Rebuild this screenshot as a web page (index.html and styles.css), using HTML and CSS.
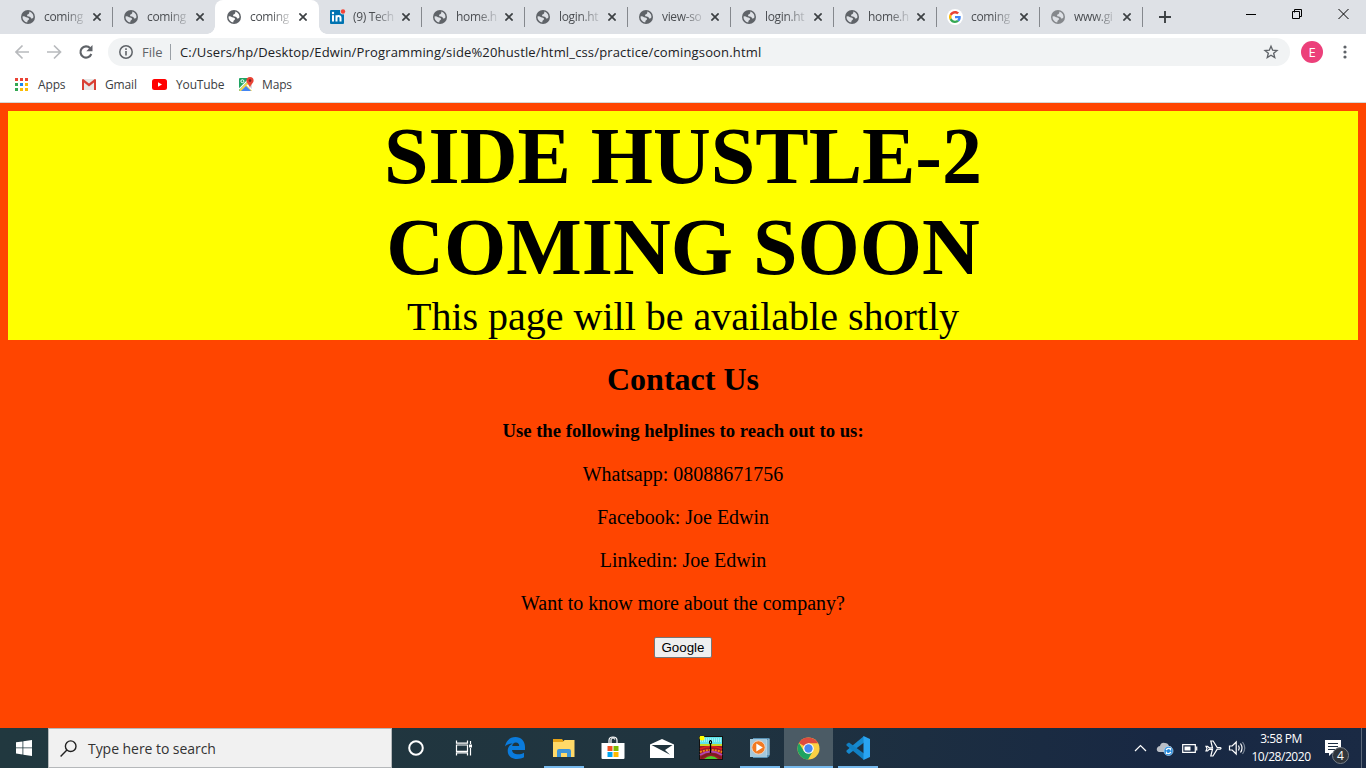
FILE: index.html
```html
<!DOCTYPE html>
<html lang="en">
<head>
<meta charset="utf-8">
<title>coming soon</title>
<link rel="stylesheet" href="styles.css">
</head>
<body>
<svg width="0" height="0" class="defs" aria-hidden="true">
  <symbol id="globe" viewBox="0 0 14 14"><circle cx="7" cy="7" r="7" fill="currentColor"/><path class="cut" d="M8.300 1.600Q10.500 2 11.800 4.300 12.700 6 12.400 7.600 11.500 8.800 10.200 8.400 9.600 6.900 7.800 6.600 6 6.600 6 5.200 6.100 4 7.600 3.900 8.600 3.500 8.300 1.600zM1.500 6.500Q3.500 6 5 7.200 6.200 7.400 7.800 8.200 8.600 9.200 7.400 10 6.300 10.400 6.200 12.500 3.800 12.100 2.400 10 1.400 8.500 1.500 6.500z"/></symbol>
  <symbol id="close" viewBox="0 0 8 8"><path d="M.4.4l7.200 7.200M7.600.4L.4 7.600" stroke="#3c4043" stroke-width="1.7" fill="none"/></symbol>
  <symbol id="google" viewBox="0 0 48 48"><path fill="#ea4335" d="M24 9.500c3.500 0 6.700 1.200 9.200 3.600l6.900-6.900C35.900 2.400 30.500 0 24 0 14.600 0 6.500 5.400 2.600 13.200l8 6.200C12.400 13.700 17.700 9.500 24 9.500z"/><path fill="#4285f4" d="M47 24.500c0-1.600-.2-3.100-.4-4.500H24v9h12.900c-.6 3-2.200 5.500-4.700 7.200l7.700 6C44.400 38 47 31.800 47 24.500z"/><path fill="#fbbc05" d="M10.500 28.600a14.500 14.500 0 010-9.200l-8-6.200a24 24 0 000 21.600z"/><path fill="#34a853" d="M24 48c6.500 0 11.900-2.100 15.900-5.800l-7.700-6c-2.200 1.500-4.900 2.300-8.200 2.300-6.300 0-11.600-4.200-13.500-9.900l-8 6.200C6.500 42.600 14.600 48 24 48z"/></symbol>
</svg>

<div class="tabs">
  <div class="tab"><svg class="fav"><use href="#globe"/></svg><span class="name">coming</span><svg class="x"><use href="#close"/></svg></div>
  <div class="tab plain"><svg class="fav"><use href="#globe"/></svg><span class="name">coming</span><svg class="x"><use href="#close"/></svg></div>
  <div class="tab active"><svg class="fav"><use href="#globe"/></svg><span class="name">coming</span><svg class="x"><use href="#close"/></svg></div>
  <div class="tab"><svg class="fav linkedin" viewBox="0 0 16 15"><rect y="1" width="14" height="14" rx="1" fill="#0073b1"/><path d="M3 6.300v6.200M6.500 12.500V6.300M6.500 9q0-2 2-2t2 2v3.500" stroke="#fff" stroke-width="2" fill="none"/><circle cx="3" cy="4" r="1.200" fill="#fff"/><circle cx="13" cy="2.500" r="3" fill="#dee1e6"/><circle cx="13" cy="2.500" r="2.200" fill="#f44336"/></svg><span class="name">(9) Tech</span><svg class="x"><use href="#close"/></svg></div>
  <div class="tab"><svg class="fav"><use href="#globe"/></svg><span class="name">home.h</span><svg class="x"><use href="#close"/></svg></div>
  <div class="tab"><svg class="fav"><use href="#globe"/></svg><span class="name">login.ht</span><svg class="x"><use href="#close"/></svg></div>
  <div class="tab"><svg class="fav"><use href="#globe"/></svg><span class="name">view-so</span><svg class="x"><use href="#close"/></svg></div>
  <div class="tab"><svg class="fav"><use href="#globe"/></svg><span class="name">login.ht</span><svg class="x"><use href="#close"/></svg></div>
  <div class="tab"><svg class="fav"><use href="#globe"/></svg><span class="name">home.h</span><svg class="x"><use href="#close"/></svg></div>
  <div class="tab"><span class="fav disc"><svg width="12" height="12"><use href="#google"/></svg></span><span class="name">coming</span><svg class="x"><use href="#close"/></svg></div>
  <div class="tab dim"><svg class="fav"><use href="#globe"/></svg><span class="name">www.gi</span><svg class="x"><use href="#close"/></svg></div>
  <svg class="plus" viewBox="0 0 12 12"><path d="M6 0v12M0 6h12" stroke="#3c4043" stroke-width="1.900"/></svg>
  <svg class="winctl" width="104" height="14" viewBox="0 0 104 14"><path d="M0 7.500h10M48.500 5.500v-3h7v7h-2M46.500 4.500h7v7h-7zM92.500 2l10 10M102.500 2l-10 10" stroke="#000" fill="none"/></svg>
</div>

<div class="toolbar">
  <svg class="nav" width="82" height="16" viewBox="0 0 82 16" fill="none"><path d="M14 8H1.500M7.500 1.500L1 8l6.500 6.500M32 8h13M39 1.500L45.500 8 39 14.500" stroke="#b8babd" stroke-width="1.700"/><path d="M75.200 4.200A5.600 5.600 0 1 0 76.300 10" stroke="#5f6368" stroke-width="2.100"/><path d="M77.500 1v6.200h-6.200z" fill="#5f6368"/></svg>
  <div class="omnibox">
    <svg width="14" height="14" viewBox="0 0 14 14" fill="none"><circle cx="7" cy="7" r="6.200" stroke="#5f6368" stroke-width="1.500"/><path d="M7 6v4.500M7 3.300v1.600" stroke="#5f6368" stroke-width="1.600"/></svg>
    <span class="file">File</span><i class="bar"></i><span class="url">C:/Users/hp/Desktop/Edwin/Programming/side%20hustle/html_css/practice/comingsoon.html</span>
    <svg class="star" width="16" height="16" viewBox="0 0 24 24"><path d="M12 3.200l2.500 6 6.500.5-5 4.200 1.600 6.400-5.600-3.500-5.600 3.500L8 13.900 3 9.700l6.500-.5z" fill="none" stroke="#5f6368" stroke-width="2"/></svg>
  </div>
  <span class="avatar">E</span>
  <svg class="dots" width="4" height="14" viewBox="0 0 4 14" fill="#5f6368"><circle cx="2" cy="2" r="1.600"/><circle cx="2" cy="7" r="1.600"/><circle cx="2" cy="12" r="1.600"/></svg>
</div>

<div class="bookmarks">
  <svg class="b-apps" width="13" height="13" viewBox="0 0 13 13"><path d="M0 0h3v3H0zM5 0h3v3H5zM10 0h3v3h-3z" fill="#ea4335"/><path d="M0 5h3v3H0z" fill="#34a853"/><path d="M5 5h3v3H5z" fill="#1a86f0"/><path d="M10 5h3v3h-3zM5 10h3v3H5zM10 10h3v3h-3z" fill="#fbbc05"/><path d="M0 10h3v3H0z" fill="#34a853"/></svg>
  <span class="w-apps">Apps</span>
  <svg class="b-gmail" width="14" height="11" viewBox="0 0 14 11"><path d="M1 0h12v11H1z" fill="#e8e8e8"/><path d="M0 1v10h2V3.500l5 4 5-4V11h2V1q0-1-1.200-1L7 4.600 1.200 0Q0 0 0 1z" fill="#d93f34"/></svg>
  <span class="w-gmail">Gmail</span>
  <svg class="b-yt" width="15" height="11" viewBox="0 0 15 11"><rect width="15" height="11" rx="2.500" fill="#f00"/><path d="M6 3.200v4.600l4-2.300z" fill="#fff"/></svg>
  <span class="w-yt">YouTube</span>
  <svg class="b-maps" width="15" height="15" viewBox="0 0 15 15"><rect y="1" width="13" height="13" rx="1" fill="#1fa463"/><path d="M0 13L11 2l2 3v9H1z" fill="#f2d34b"/><path d="M2 14l5-5 5 5z" fill="#4285f4"/><path d="M8 8l5 5V7z" fill="#dadce0"/><path d="M0 12L10 2M8 8l6 6" stroke="#fff" stroke-width="1.200"/><path d="M11 0a3.600 3.600 0 00-3.600 3.600C7.400 6.200 10.200 7 11 11c.8-4 3.600-4.800 3.600-7.400A3.600 3.600 0 0011 0z" fill="#ea4335"/><circle cx="11" cy="3.600" r="1.300" fill="#7b231e"/><circle cx="3.400" cy="4.200" r="1.500" fill="none" stroke="#fff"/></svg>
  <span class="w-maps">Maps</span>
</div>

<main class="page">
  <header class="hero">
    <h1>SIDE HUSTLE-2<br>COMING SOON</h1>
    <div class="sub">This page will be available shortly</div>
  </header>
  <h2>Contact Us</h2>
  <h3>Use the following helplines to reach out to us:</h3>
  <p>Whatsapp: 08088671756</p>
  <p>Facebook: Joe Edwin</p>
  <p>Linkedin: Joe Edwin</p>
  <p>Want to know more about the company?</p>
  <button class="go">Google</button>
</main>

<footer class="taskbar">
  <div class="start"><svg width="16" height="16" viewBox="0 0 16 16" fill="#fff"><path d="M0 2.300L6.500 1.400v6.100H0zM7.300 1.200L16 0v7.500H7.300zM0 8.300h6.500v6.200L0 13.600zM7.300 8.300H16V16l-8.700-1.200z"/></svg></div>
  <div class="search"><svg width="17" height="17" viewBox="0 0 17 17" fill="none" stroke="#222" stroke-width="1.400"><circle cx="10.700" cy="6.200" r="5.300"/><path d="M6.900 10L.6 16.400"/></svg><span>Type here to search</span></div>
  <div class="app task"><svg width="16" height="16" viewBox="0 0 16 16"><circle cx="8" cy="8" r="6.800" fill="none" stroke="#fff" stroke-width="2"/></svg></div>
  <div class="app view"><svg width="18" height="16" viewBox="0 0 18 16" fill="none" stroke="#fff" stroke-width="1.200"><path d="M1.500.5v2.700h11V.5M1.500 15.500v-2.700h11v2.700M1.500 5h11v6.300h-11zM15.500 1v3M15.500 8v7.500"/><path d="M14 4.500h3v3h-3z" fill="#fff" stroke="none"/></svg></div>
  <div class="app"><svg width="22" height="22" viewBox="0 0 22 22"><path d="M1 9.500C2 3.500 6 0 11.500 0 17 0 21 4 21 10v3H8c.4 3 3 4.300 6.200 4.300 2.300 0 4-.6 5.800-1.600v4.500c-2 1.200-4.300 1.700-7 1.700-5.700 0-9.300-3.300-9.300-8 0-3.400 1.800-6 5-7.400C5.500 6.400 3 7.300 1 9.500zM8.200 9h7c0-2.300-1.200-3.600-3.300-3.600S8.500 6.800 8.200 9z" fill="#0a7bdc"/></svg></div>
  <div class="app open"><svg width="22" height="18" viewBox="0 0 22 18"><path d="M0 0h9l1.500 2H21v16H0z" fill="#e6a317"/><path d="M0 3h10l1.500-2H21.500v17H0z" fill="#ffd968"/><path d="M4 18v-6q0-2 2-2h10q2 0 2 2v6h-4v-4H8v4z" fill="#3d94d8"/></svg></div>
  <div class="app"><svg width="24" height="24" viewBox="0 0 24 24"><path d="M8 8V4.500Q8 1 12 1t4 3.500V8M10 7V3.500Q12 .5 14 3.500" fill="none" stroke="#fff" stroke-width="1.200"/><path d="M.5 7h23v15q0 1-1 1h-21q-1 0-1-1z" fill="#fff"/><path d="M6.500 10h5v5h-5z" fill="#f25022"/><path d="M12.500 10h5v5h-5z" fill="#7fba00"/><path d="M6.500 16h5v5h-5z" fill="#00a4ef"/><path d="M12.500 16h5v5h-5z" fill="#ffb900"/></svg></div>
  <div class="app"><svg width="24" height="19" viewBox="0 0 24 19"><path d="M0 5.500L12 0l12 5.500V19H0z" fill="#fff"/><path d="M1.500 6h21L15 11l5 4.700L11 11z" fill="#20343d"/></svg></div>
  <div class="app"><svg width="24" height="24" viewBox="0 0 24 24"><path d="M0 0h24v24H0z" fill="#111"/><path d="M1 1h22v7H1z" fill="#5fe4ea"/><path d="M1 5h22M1 3h22" stroke="#d8ffff" stroke-dasharray="1 1"/><circle cx="3" cy="2" r="2.500" fill="#ff0"/><path d="M1 8h22v2H1z" fill="#c9d426"/><path d="M1 10h22v13H1z" fill="#a01828"/><g fill="none"><path d="M1 13q11-5 22 0" stroke="#e02020" stroke-width="1.500"/><path d="M1 16q11-4 22 0" stroke="#f08a10" stroke-width="2" stroke-dasharray="2 1"/><path d="M1 19q11-7 22 0" stroke="#b048b0" stroke-width="2"/><path d="M2 22q10-8 20 0" stroke="#7b1d20" stroke-width="2"/></g><path d="M5 23q7-6 14 0z" fill="#4cd02a"/><path d="M11.500 4v13" stroke="#000" stroke-width="1.300"/><path d="M10.500 5h2v2.500h-2z" fill="#7ee" stroke="#000"/></svg></div>
  <div class="app open"><svg width="20" height="20" viewBox="0 0 20 20"><path d="M3 0h16.500v18L17 20H3z" fill="#5892b5"/><path d="M0 1h17v18H0z" fill="#a4c8dc"/><path d="M17 2v15M19 1v16" stroke="#d5e9f3" stroke-width=".7"/><circle cx="8.500" cy="9.500" r="6.700" fill="#f27a22" stroke="#e9d5c8"/><path d="M6.300 5.500v8l6.500-4z" fill="#fff"/></svg></div>
  <div class="app open current"><svg width="23" height="23" viewBox="0 0 48 48"><circle cx="24" cy="24" r="23" fill="#fbd043"/><path d="M24 24L4 12.500A23 23 0 0 1 44 13H24z" fill="#dd4b3e"/><path d="M4 12.500A23 23 0 0 0 23 47l10-17.500L24 34 14.500 29.500z" fill="#1ea362"/><circle cx="24" cy="24" r="11" fill="#fff"/><circle cx="24" cy="24" r="8.700" fill="#4587f3"/></svg></div>
  <div class="app open"><svg width="24" height="24" viewBox="0 0 24 24"><path d="M18 0v6.500L3 18l-2.500-2v-1.500z" fill="#1689cf"/><path d="M3 6.500L.5 8v1.500L18 24v-6.500z" fill="#1180c4"/><path d="M17.500 0L24 3v18l-6.500 3z" fill="#29a4f2"/></svg></div>
  <div class="tray">
    <svg width="112" height="20" viewBox="0 0 112 20" fill="none" stroke="#fff" stroke-width="1.200"><path d="M1 13l5.500-5.500L12 13"/><path d="M25 14q-3-1-2-4 1-2 3-2 1-4 5-3 3 0 4 3 3 0 3 3v3z" fill="#b9bec6" stroke="none"/><circle cx="34.500" cy="13" r="4.500" fill="#2087dc" stroke="#b9dcf6" stroke-width=".7"/><path d="M32 12q2.500-3 4.500-.5V10M37 14q-2.500 3-4.500.5V16"/><path d="M48.700 6.600h12.600v7.800H48.700zM62.700 8.500v4"/><path d="M50.500 8.500h6v4h-6z" fill="#fff" stroke="none"/><path d="M72 8.300l1.500 0 1.700 1.500h3.300L76.800 3h2.300l4.100 6.500h3q1.700.7 0 1.700h-3L79 18h-2.200l1.700-6.600h-3.300L73.500 13H72l1-2.500z"/><path d="M95.500 8h2.700l4-4v12l-4-4h-2.700zM104.500 7.500q1.500 2.500 0 5M106.500 5.500q3 4.500 0 9"/><path d="M108.500 4q4.500 6 0 12" stroke="#7b8797"/></svg>
    <div class="clock"><span class="time">3:58 PM</span><span class="date">10/28/2020</span></div>
    <div class="notes"><svg width="16" height="16" viewBox="0 0 16 16"><path d="M0 0h16v13H7l-3 3v-3H0z" fill="#fff"/><path d="M3 3.500h10M3 6.500h10M3 9.500h7" stroke="#1b2d42"/></svg><span class="count">4</span></div>
    <i class="peek"></i>
  </div>
</footer>
</body>
</html>
```

FILE: styles.css
```css
* { box-sizing: border-box; }
body { margin: 0; width: 1366px; height: 768px; overflow: hidden; display: flex; flex-direction: column; font-family: "Open Sans", "Noto Sans", sans-serif; color: #3c4043; background: #fff; }
svg { display: block; flex: none; }
.defs { position: absolute; }

.tabs { height: 34px; flex: none; display: flex; background: #dee1e6; padding-left: 9px; }
.tab { --cut: #dee1e6; width: 103px; height: 34px; flex: none; display: flex; align-items: center; padding-left: 12px; position: relative; color: #5f6368; }
.cut { fill: var(--cut); }
.tab::after { content: ""; width: 1px; height: 20px; background: #85888d; position: absolute; right: -1px; top: 7px; }
.tab.plain::after { display: none; }
.tab.active { --cut: #fff; z-index: 1; }
.tab.active::before { content: ""; position: absolute; left: 0; top: 0; width: 104px; height: 34px; background: #fff; border-radius: 8px 8px 0 0; }
.tab.active::after { left: -8px; right: auto; top: 26px; width: 120px; height: 8px; background: radial-gradient(circle at 0 0, transparent 7.5px, #fff 8px) left / 8px 8px no-repeat, radial-gradient(circle at 100% 0, transparent 7.5px, #fff 8px) right / 8px 8px no-repeat; }
.tab.active > * { position: relative; }
.tab.dim { color: #85888c; }
.fav { width: 14px; height: 14px; flex: none; }
.fav.linkedin { width: 16px; height: 15px; margin: 0 -2px 1px 0; }
.fav.disc { display: flex; align-items: center; justify-content: center; background: #fff; border-radius: 50%; box-shadow: 0 0 0 1px #fff; }
.name { width: 41px; height: 18px; flex: none; margin-left: 9px; white-space: nowrap; font-size: 12px; letter-spacing: -.35px; line-height: 18px; color: #4a4d51; -webkit-mask-image: linear-gradient(90deg, #000 50%, rgba(0,0,0,.15)); mask-image: linear-gradient(90deg, #000 50%, rgba(0,0,0,.15)); }
.x { width: 8px; height: 8px; margin-left: 8px; }
.plus { width: 12px; height: 12px; margin: 11px 0 0 17px; }
.winctl { margin: 7px 0 0 75px; }

.toolbar { height: 36px; flex: none; display: flex; align-items: center; }
.nav { margin-left: 15px; }
.omnibox { width: 1182px; height: 28px; margin-left: 11px; border-radius: 14px; background: #f1f3f4; display: flex; align-items: center; padding-left: 11px; }
.file { width: 28px; margin-left: 9px; font-size: 13px; color: #5f6368; }
.bar { width: 1px; height: 16px; background: #9aa0a6; }
.url { width: 1083px; margin-left: 9px; font-size: 13px; letter-spacing: .155px; color: #202124; white-space: nowrap; }
.star { margin-right: 9px; }
.avatar { width: 22px; height: 22px; margin-left: 11px; border-radius: 50%; background: #ec407a; color: #fff; font-size: 13px; line-height: 22px; text-align: center; }
.dots { margin-left: 20px; }

.bookmarks { height: 33px; flex: none; display: flex; align-items: center; padding: 0 0 4px 15px; font-size: 12px; letter-spacing: -.15px; border-bottom: 1px solid #d5d8d5; }
.w-apps { width: 44px; margin-left: 10px; }
.w-gmail { width: 47px; margin-left: 9px; }
.w-yt { width: 63px; margin-left: 9px; }
.w-maps { margin-left: 8px; }

.page { height: 625px; flex: none; padding: 8px; background: #ff4500; color: #000; text-align: center; font-family: "Liberation Serif", "Times New Roman", serif; }
.hero { background: #ff0; height: 229px; }
h1 { margin: 0; font-size: 80px; line-height: 91px; }
.sub { font-size: 40px; line-height: 47px; }
h2 { margin: 21px 0 22px; font-size: 32px; line-height: 37px; }
h3 { margin: 0; font-size: 18.72px; line-height: 22px; }
p { margin: 20px 0 0; font-size: 20px; line-height: 23px; }
h3 + p { margin-top: 21px; }
.go { display: block; width: 58px; height: 21px; margin: 22px auto 0; padding: 0; border: 1px solid #767676; border-radius: 2px; background: #efefef; font: 13.333px "Liberation Sans", Arial, sans-serif; color: #000; }

.taskbar { height: 40px; flex: none; display: flex; background: linear-gradient(90deg, #21383f, #20343f 50%, #182843 85%, #1a2a44); }
.start { width: 48px; display: flex; align-items: center; justify-content: center; }
.search { width: 344px; background: #f1f1f1; border: 1px solid #b5b8ba; display: flex; align-items: center; padding-left: 11px; font-size: 14px; letter-spacing: -.05px; color: #333; }
.search svg { margin-right: 11px; }
.app { width: 49px; display: flex; align-items: center; justify-content: center; position: relative; }
.app.task { width: 48px; }
.app.view { width: 50px; padding-right: 3px; }
.open::after { content: ""; position: absolute; left: 5px; right: 4px; bottom: 0; height: 2px; background: #76b9ed; }
.current { background: #4b5b65; }
.current::after { left: 0; right: 0; }
.tray { margin-left: auto; width: 232px; display: flex; align-items: center; color: #fff; }
.clock { width: 70px; display: flex; flex-direction: column; align-items: center; font-size: 12px; line-height: 18px; letter-spacing: -.45px; }
.notes { margin-left: 9px; position: relative; }
.count { position: absolute; left: 7px; top: 7px; width: 17px; height: 17px; border-radius: 50%; border: 1px solid #777f88; background: #30353b; font-size: 12px; line-height: 15px; text-align: center; }
.peek { width: 1px; height: 40px; margin-left: 20px; background: #5c6879; }
```
